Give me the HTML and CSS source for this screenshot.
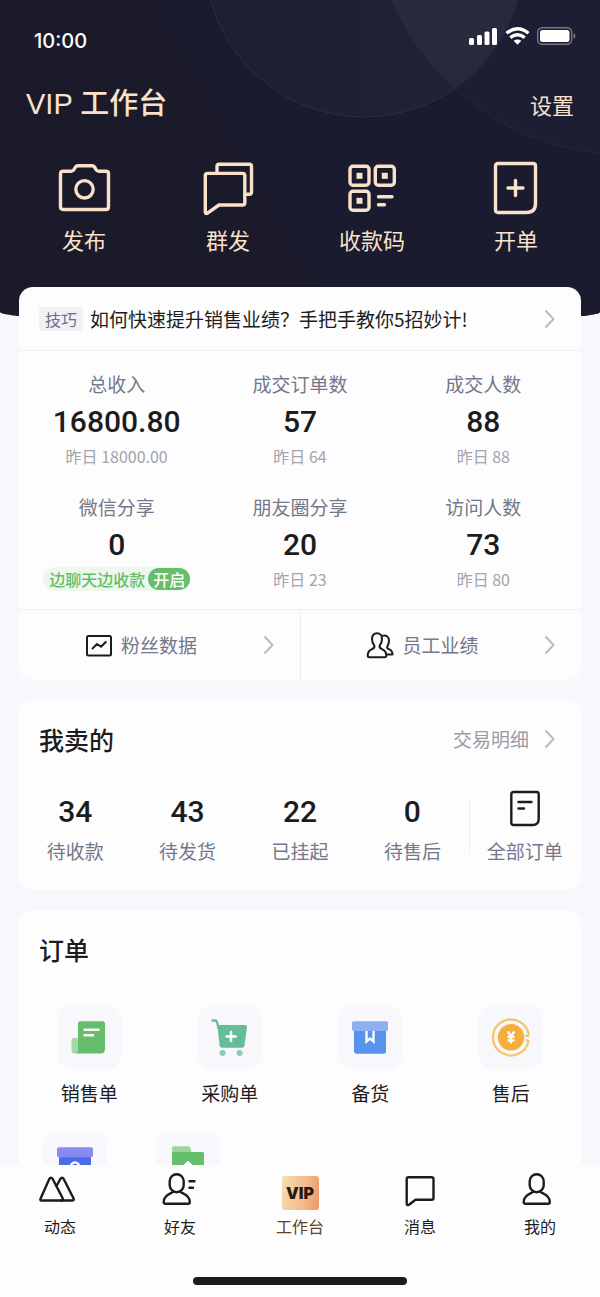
FILE: index.html
```html
<!DOCTYPE html>
<html lang="zh-CN">
<head>
  <meta charset="UTF-8">
  <meta name="viewport" content="width=device-width, initial-scale=1.0">
  <title>VIP 工作台</title>
  <link rel="stylesheet" href="styles.css">
</head>
<body>
  <div class="app">
    <main class="content">
      <header class="hero">
        <svg class="hero-bg" viewBox="0 0 600 324" preserveAspectRatio="xMidYMin slice" aria-hidden="true">
          <defs>
            <linearGradient id="circle-fill" x1="0" y1="0" x2="1" y2="0">
              <stop offset="0" stop-color="#1d1e31"/>
              <stop offset="1" stop-color="#21233a"/>
            </linearGradient>
            <clipPath id="circle-clip"><circle cx="364" cy="-42" r="159"/></clipPath>
          </defs>
          <path d="M155 0H600V324H340Z" fill="#1b1b2f"/>
          <circle cx="627" cy="-102" r="257" fill="#1d1e34" stroke="#26273d"/>
          <circle cx="364" cy="-42" r="159" fill="url(#circle-fill)" stroke="#2b2d45"/>
          <circle cx="627" cy="-102" r="257" fill="#29293d" clip-path="url(#circle-clip)"/>
        </svg>
        <div class="status-bar">
          <span class="status-time">10:00</span>
          <div class="status-icons">
            <svg width="29" height="18" viewBox="0 0 29 18" fill="#fff">
              <rect x="0" y="11" width="5" height="7" rx="1.5"/>
              <rect x="8" y="8" width="5" height="10" rx="1.5"/>
              <rect x="15.500" y="4.500" width="5" height="13.500" rx="1.500"/>
              <rect x="23" y="1" width="5" height="17" rx="1.5"/>
            </svg>
            <svg width="25" height="18" viewBox="0 0 25 18" fill="none" stroke="#fff" stroke-width="3.400">
              <path d="M1.500 6.300Q12.500-2.700 23.500 6.300"/>
              <path d="M5.300 10.700Q12.500 5 19.700 10.700"/>
              <path d="M12.500 17.800L8.600 13.800Q12.500 11 16.400 13.800Z" fill="#fff" stroke="none"/>
            </svg>
            <svg width="39" height="18" viewBox="0 0 39 18">
              <rect x=".7" y=".7" width="34" height="16.600" rx="4.500" fill="none" stroke="#777886" stroke-width="1.400"/>
              <rect x="3" y="3" width="29.500" height="12" rx="2.500" fill="#fff"/>
              <path d="M36.500 6v6q2-1 2-3t-2-3z" fill="#777886"/>
            </svg>
          </div>
        </div>
        <div class="hero-head">
          <h1 class="hero-title">VIP 工作台</h1>
          <a class="hero-link" href="#">设置</a>
        </div>
        <nav class="quick">
          <a class="quick-item" href="#">
            <svg class="quick-icon" viewBox="0 0 60 60">
              <path d="M9.300 13.300H17Q19 13.300 20 11.500L21.500 9Q22.300 7.700 24 7.700H38Q39.700 7.700 40.500 9L42 11.500Q43 13.300 45 13.300H52Q54.500 13.300 54.500 15.800V49Q54.500 51.500 52 51.500H9Q6.500 51.500 6.500 49V16Q6.500 13.300 9.300 13.300Z"/>
              <circle cx="30.500" cy="31.300" r="8.700"/>
            </svg>
            <span>发布</span>
          </a>
          <a class="quick-item" href="#">
            <svg class="quick-icon" viewBox="0 0 60 60">
              <path d="M19 15V8.500Q19 6.300 21.200 6.300H51.300Q53.500 6.300 53.500 8.500V34Q53.500 36.300 51.300 36.300H47"/>
              <path d="M9.500 15.400H44.500Q46.800 15.400 46.800 17.700V44.700Q46.800 47 44.500 47H21L9.500 55.200Q7.300 56 7.300 54V17.700Q7.300 15.400 9.500 15.400Z"/>
            </svg>
            <span>群发</span>
          </a>
          <a class="quick-item" href="#">
            <svg class="quick-icon" viewBox="0 0 60 60">
              <rect x="8" y="8.300" width="19" height="19" rx="3"/>
              <rect x="33.300" y="8.300" width="19" height="19" rx="3"/>
              <rect x="8" y="33.300" width="19" height="19" rx="3"/>
              <path d="M36.500 38.700H50M36.500 46.700H42.500"/>
              <g fill="#fae1ca" stroke="none">
                <rect x="14.500" y="14.800" width="6" height="6"/>
                <rect x="39.800" y="14.800" width="6" height="6"/>
                <rect x="14.500" y="39.800" width="6" height="6"/>
              </g>
            </svg>
            <span>收款码</span>
          </a>
          <a class="quick-item" href="#">
            <svg class="quick-icon" viewBox="0 0 60 60">
              <path d="M12 5.500H47Q49.500 5.500 49.500 8V45.500Q49.500 54.500 40.500 54.500H12Q9.500 54.500 9.500 52V8Q9.500 5.500 12 5.500Z"/>
              <path d="M29.500 22.500V37.500M22 30H37"/>
            </svg>
            <span>开单</span>
          </a>
        </nav>
      </header>

      <section class="card card-stats">
        <a class="tip" href="#">
          <span class="tip-tag">技巧</span>
          <span class="tip-text">如何快速提升销售业绩？手把手教你5招妙计!</span>
          <svg class="chevron" viewBox="0 0 11 20"><path d="M1.500 1.500L9.500 10L1.500 18.500"/></svg>
        </a>
        <div class="stats">
          <div class="stat">
            <span class="label">总收入</span>
            <strong class="number">16800.80</strong>
            <span class="sub">昨日 18000.00</span>
          </div>
          <div class="stat">
            <span class="label">成交订单数</span>
            <strong class="number">57</strong>
            <span class="sub">昨日 64</span>
          </div>
          <div class="stat">
            <span class="label">成交人数</span>
            <strong class="number">88</strong>
            <span class="sub">昨日 88</span>
          </div>
          <div class="stat">
            <span class="label">微信分享</span>
            <strong class="number">0</strong>
            <span class="promo">边聊天边收款<button class="promo-btn" type="button">开启</button></span>
          </div>
          <div class="stat">
            <span class="label">朋友圈分享</span>
            <strong class="number">20</strong>
            <span class="sub">昨日 23</span>
          </div>
          <div class="stat">
            <span class="label">访问人数</span>
            <strong class="number">73</strong>
            <span class="sub">昨日 80</span>
          </div>
        </div>
        <div class="links">
          <a class="link" href="#">
            <span class="link-body">
              <svg class="link-icon" viewBox="0 0 28 28">
                <rect x="2" y="5" width="24" height="19.500" rx="1.500"/>
                <path d="M7.500 17.500L12 13L16 15.800L20.800 11"/>
              </svg>
              粉丝数据
            </span>
            <svg class="chevron" viewBox="0 0 11 20"><path d="M1.500 1.500L9.500 10L1.500 18.500"/></svg>
          </a>
          <a class="link" href="#">
            <span class="link-body">
              <svg class="link-icon" viewBox="0 0 28 28">
                <path d="M8.300 14.500C6.500 12.500 6 10.500 6 7.700C6 4.500 8 2.300 11 2.300S16 4.500 16 7.700C16 10.500 15.500 12.500 13.700 14.500C13 16.500 14 17.300 16 18.200C19 19.500 20.300 21 20.300 24.500Q20.300 26.300 18.800 26.300H3.200Q1.700 26.300 1.700 24.500C1.700 21 3 19.500 6 18.200C8 17.300 9 16.500 8.300 14.500Z"/>
                <path d="M16 4.900C20.500 3.700 23 6 23 9.500C23 12 22.500 13.500 21.500 15C20.500 17 21.500 17.500 23 18.200C25.500 19.300 26.500 21.300 26.500 23.500H20.500"/>
              </svg>
              员工业绩
            </span>
            <svg class="chevron" viewBox="0 0 11 20"><path d="M1.500 1.500L9.500 10L1.500 18.500"/></svg>
          </a>
        </div>
      </section>

      <section class="card">
        <div class="card-head">
          <h2 class="card-title">我卖的</h2>
          <a class="card-more" href="#">
            交易明细
            <svg class="chevron" viewBox="0 0 11 20"><path d="M1.500 1.500L9.500 10L1.500 18.500"/></svg>
          </a>
        </div>
        <div class="sold">
          <a class="sold-item" href="#"><strong class="number">34</strong><span class="label">待收款</span></a>
          <a class="sold-item" href="#"><strong class="number">43</strong><span class="label">待发货</span></a>
          <a class="sold-item" href="#"><strong class="number">22</strong><span class="label">已挂起</span></a>
          <a class="sold-item" href="#"><strong class="number">0</strong><span class="label">待售后</span></a>
          <a class="sold-item sold-all" href="#">
            <svg class="sold-icon" viewBox="0 0 36 42">
              <path d="M6.500 4H29.500Q31.700 4 31.700 6.200V31Q31.700 37 25.700 37H6.500Q4.300 37 4.300 34.800V6.200Q4.300 4 6.500 4Z"/>
              <path d="M11.500 14H24.500M11.500 20.500H17"/>
            </svg>
            <span class="label">全部订单</span>
          </a>
        </div>
      </section>

      <section class="card">
        <div class="card-head">
          <h2 class="card-title">订单</h2>
        </div>
        <div class="orders">
          <a class="order" href="#">
            <svg class="order-icon" viewBox="0 0 64 64">
              <path d="M17 33H22V48.500H17Q14.500 48.500 14.500 46V35.500Q14.500 33 17 33Z" fill="#a5d8a7"/>
              <path d="M23 16.300H45.500Q48 16.300 48 18.800V44Q48 48.500 43.500 48.500H19Q21 47.500 21 45V18.300Q21 16.300 23 16.300Z" fill="#66bd6b"/>
              <path d="M27.500 24.700H41.500M27.500 30.300H36" stroke="#fff" stroke-width="2.400" stroke-linecap="round"/>
            </svg>
            <span>销售单</span>
          </a>
          <a class="order" href="#">
            <svg class="order-icon" viewBox="0 0 64 64">
              <path d="M14.500 15.500H17Q18.500 15.500 19 17L20.500 23" fill="none" stroke="#66bd9a" stroke-width="2.400" stroke-linecap="round"/>
              <path d="M19.300 20H47.500Q49.300 20 49 22L46.500 40.500Q46.200 42.700 44 42.700H24Q22 42.700 21.600 40.500Z" fill="#66bd9a"/>
              <path d="M33 27V36M28.500 31.500H37.500" stroke="#fff" stroke-width="2.600" stroke-linecap="round"/>
              <circle cx="24.600" cy="48" r="3" fill="#8bcdb2"/>
              <circle cx="41.600" cy="48" r="3" fill="#8bcdb2"/>
            </svg>
            <span>采购单</span>
          </a>
          <a class="order" href="#">
            <svg class="order-icon" viewBox="0 0 64 64">
              <path d="M16 24H48V46Q48 48.700 45.500 48.700H18.500Q16 48.700 16 46Z" fill="#5793ea"/>
              <rect x="14" y="16.300" width="36" height="9.700" rx="1.500" fill="#8bb1f0"/>
              <path d="M28.500 26V36.500L32 33.500L35.500 36.500V26" fill="none" stroke="#fff" stroke-width="2.400"/>
            </svg>
            <span>备货</span>
          </a>
          <a class="order" href="#">
            <svg class="order-icon" viewBox="0 0 64 64">
              <path d="M49.800 30A18 18 0 1 0 49.500 36.500L47 34.500M50 31.500L46 30.500" fill="none" stroke="#f2c46c" stroke-width="2.200"/>
              <circle cx="32" cy="32.300" r="13.200" fill="#f4ae3d"/>
              <path d="M28.700 26.500L32 31L35.300 26.500M32 31V38.500M28.500 31.800H35.500M28.500 35.300H35.500" fill="none" stroke="#fff" stroke-width="2.200"/>
            </svg>
            <span>售后</span>
          </a>
        </div>
        <div class="orders orders-more">
          <a class="order" href="#">
            <svg class="order-icon" viewBox="0 0 64 64">
              <path d="M16 24H48V46Q48 48.700 45.500 48.700H18.500Q16 48.700 16 46Z" fill="#4a6bea"/>
              <rect x="14" y="15.300" width="36" height="10" rx="2" fill="#868af2"/>
              <circle cx="32" cy="34.500" r="4" fill="none" stroke="#fff" stroke-width="2.400"/>
            </svg>
          </a>
          <a class="order" href="#">
            <svg class="order-icon" viewBox="0 0 64 64">
              <path d="M18 14.300H32Q34 14.300 34.500 16L36 22H16V16.300Q16 14.300 18 14.300Z" fill="#9dd3a0"/>
              <path d="M16 20H46.500Q48 20 48 21.500V46Q48 48.500 45.500 48.500H18.500Q16 48.500 16 46Z" fill="#66bd6b"/>
              <path d="M32 29L38 35H34V41H30V35H26Z" fill="#fff" stroke="#fff" stroke-linejoin="round"/>
            </svg>
          </a>
        </div>
      </section>
    </main>

    <footer class="tabbar">
      <nav class="tabs">
        <a class="tab" href="#">
          <svg class="tab-icon" viewBox="0 0 48 42">
            <path d="M4.600 29.500L13.300 10Q15 7.300 16.700 10L26.800 29.500Q27.300 31.500 25.500 31.500H5.500Q3.700 31.500 4.600 29.500Z"/>
            <path d="M20.500 17L24.300 10Q26 7.300 27.700 10L37.600 29.500Q38.300 31.500 36.500 31.500H25"/>
          </svg>
          <span>动态</span>
        </a>
        <a class="tab" href="#">
          <svg class="tab-icon" viewBox="0 0 48 42">
            <rect x="13.700" y="5.200" width="14" height="18" rx="7"/>
            <path d="M17.500 22.500C15 25 7.700 25.500 7.700 33Q7.700 34.700 9.500 34.700H32Q33.800 34.700 33.800 33C33.800 25.500 26.500 25 24 22.500"/>
            <path d="M33.500 12.300H38.500M33.500 18.700H37"/>
          </svg>
          <span>好友</span>
        </a>
        <a class="tab tab-active" href="#" aria-current="page">
          <span class="tab-badge">VIP</span>
          <span>工作台</span>
        </a>
        <a class="tab" href="#">
          <svg class="tab-icon" viewBox="0 0 48 42">
            <path d="M12.500 8.300H35.500Q37.500 8.300 37.500 10.300V28.700Q37.500 30.700 35.500 30.700H19.500L13 35.700Q10.700 37 10.700 34.500V10.300Q10.700 8.300 12.500 8.300Z"/>
          </svg>
          <span>消息</span>
        </a>
        <a class="tab" href="#">
          <svg class="tab-icon" viewBox="0 0 48 42">
            <rect x="13.700" y="5.200" width="14" height="18" rx="7"/>
            <path d="M17.500 22.500C15 25 7.700 25.500 7.700 33Q7.700 34.700 9.500 34.700H32Q33.800 34.700 33.800 33C33.800 25.500 26.500 25 24 22.500"/>
          </svg>
          <span>我的</span>
        </a>
      </nav>
      <div class="home-indicator"></div>
    </footer>
  </div>
</body>
</html>
```

FILE: styles.css
```css
* {
  margin: 0;
  padding: 0;
  box-sizing: border-box;
}
body {
  background-color: #f8f7fc;
  font-family: "Noto Sans CJK SC", sans-serif;
  font-size: 19px;
  line-height: 24px;
  color: #1c1c20;
}
a {
  color: inherit;
  text-decoration: none;
}
svg {
  display: block;
  flex-shrink: 0;
}
.app {
  display: flex;
  flex-direction: column;
  height: 100vh;
}
.content {
  flex: 1;
  min-height: 0;
  overflow: hidden;
}

/* Header */
.hero {
  position: relative;
  overflow: hidden;
  padding-bottom: 70px;
  background-color: #1a1a2a;
  border-radius: 0 0 50% 50% / 0 0 12px 12px;
  color: #fae1ca;
}
.hero-bg {
  position: absolute;
  top: 0;
  left: 0;
  width: 100%;
  height: 100%;
}
.status-bar,
.hero-head,
.quick {
  position: relative;
}
.status-bar {
  display: flex;
  justify-content: space-between;
  padding: 27px 24px 0 34px;
  color: #fff;
}
.status-time {
  font-family: Inter, sans-serif;
  font-size: 20px;
  font-weight: 500;
  line-height: 28px;
}
.status-icons {
  display: flex;
  gap: 7px;
}
.hero-head {
  display: flex;
  justify-content: space-between;
  align-items: center;
  margin-top: 29px;
  padding: 0 26px;
}
.hero-title {
  font-family: "Liberation Sans", "Noto Sans CJK SC", sans-serif;
  font-size: 29px;
  font-weight: 500;
  line-height: 40px;
}
.hero-link {
  font-size: 22px;
  line-height: 30px;
}
.quick {
  display: grid;
  grid-template-columns: repeat(4, 1fr);
  margin-top: 34px;
  padding: 0 12px;
}
.quick-item {
  display: flex;
  flex-direction: column;
  align-items: center;
  gap: 6px;
  font-size: 22px;
  line-height: 30px;
}
.quick-icon {
  width: 60px;
  height: 60px;
  fill: none;
  stroke: #fae1ca;
  stroke-width: 3.4;
  stroke-linecap: round;
  stroke-linejoin: round;
}

/* Cards */
.card {
  margin: 0 19px 20px;
  background-color: #fdfdfe;
  border-radius: 14px;
}
.card-stats {
  position: relative;
  margin-top: -37px;
}
.card-head {
  display: flex;
  justify-content: space-between;
  align-items: center;
  height: 78px;
  padding: 0 26px 0 20px;
}
.card-title {
  font-size: 25px;
  font-weight: 500;
  line-height: 36px;
}
.card-more {
  display: flex;
  align-items: center;
  gap: 15px;
  color: #9a9ba3;
}
.chevron {
  width: 11px;
  height: 20px;
  fill: none;
  stroke: #b9bac2;
  stroke-width: 2;
}
.label {
  color: #74778a;
}
.number {
  font-family: Roboto, sans-serif;
  font-size: 30px;
  font-weight: 500;
  line-height: 36px;
}

.tip {
  display: flex;
  align-items: center;
  height: 64px;
  padding: 0 26px 0 20px;
  border-bottom: 1px solid #efeff3;
}
.tip-tag {
  padding: 0 6px;
  margin-right: 7px;
  background-color: #f1f1f5;
  border-radius: 4px;
  font-size: 16px;
  color: #6c7083;
}
.tip-text {
  flex: 1;
  white-space: nowrap;
}

.stats {
  display: grid;
  grid-template-columns: repeat(3, 1fr);
  row-gap: 27px;
  padding: 21px 6px 18px;
}
.stat {
  display: flex;
  flex-direction: column;
  align-items: center;
}
.stat .number {
  margin: 8px 0 4px;
}
.sub {
  font-size: 16px;
  color: #a3a4ab;
}
.promo {
  display: flex;
  align-items: center;
  gap: 3px;
  padding: 0 1px 0 6px;
  margin-left: 1px;
  background-color: #edf7ee;
  border-radius: 12px;
  font-size: 16px;
  font-weight: 500;
  color: #66bd6b;
}
.promo-btn {
  height: 22px;
  padding: 0 5px;
  border: none;
  border-radius: 11px;
  background-color: #66bd6b;
  font: inherit;
  line-height: 22px;
  color: #fff;
}

.links {
  display: grid;
  grid-template-columns: 1fr 1fr;
  border-top: 1px solid #efeff3;
}
.link {
  display: flex;
  align-items: center;
  height: 70px;
  padding-right: 26px;
  color: #74778a;
}
.link + .link {
  border-left: 1px solid #efeff3;
}
.link-body {
  display: flex;
  flex: 1;
  justify-content: center;
  align-items: center;
  gap: 8px;
}
.link-icon,
.sold-icon,
.tab-icon {
  fill: none;
  stroke: #1c1c20;
  stroke-width: 2;
  stroke-linecap: round;
  stroke-linejoin: round;
}
.link-icon {
  width: 28px;
  height: 28px;
}

.sold {
  display: grid;
  grid-template-columns: repeat(5, 1fr);
  align-items: end;
  padding: 10px 0 27px;
}
.sold-item {
  display: flex;
  flex-direction: column;
  align-items: center;
  gap: 9px;
}
.sold-all {
  position: relative;
}
.sold-all::before {
  content: '';
  position: absolute;
  top: 12px;
  left: 0;
  width: 1px;
  height: 52px;
  background-color: #efeff3;
}
.sold-icon {
  width: 36px;
  height: 42px;
  stroke-width: 2.4;
}

.orders {
  display: grid;
  grid-template-columns: repeat(4, 1fr);
  padding: 17px 0 27px;
}
.orders-more {
  grid-template-columns: repeat(5, 1fr);
  padding-top: 0;
}
.order {
  display: flex;
  flex-direction: column;
  align-items: center;
  gap: 12px;
}
.order-icon {
  width: 64px;
  height: 64px;
  background-color: #f8f7fc;
  border-radius: 14px;
}

/* Bottom tabs */
.tabbar {
  padding: 4px 0 12px;
  background-color: #fdfdfe;
}
.tabs {
  display: grid;
  grid-template-columns: repeat(5, 1fr);
}
.tab {
  display: flex;
  flex-direction: column;
  align-items: center;
  justify-content: flex-end;
  gap: 5px;
  font-size: 16px;
  line-height: 20px;
}
.tab-icon {
  width: 48px;
  height: 42px;
  stroke-width: 2.4;
}
.tab-active {
  color: #5c4326;
}
.tab-badge {
  width: 37px;
  margin-bottom: 1px;
  background: linear-gradient(100deg, #f7dcb6, #f5b98c 60%, #ea9868);
  border-radius: 3px;
  font-family: Inter, sans-serif;
  font-weight: 900;
  line-height: 34px;
  text-align: center;
  color: #2b1a10;
}
.home-indicator {
  width: 214px;
  height: 8px;
  margin: 41px auto 0;
  border-radius: 4px;
  background-color: #1c1c20;
}
```
